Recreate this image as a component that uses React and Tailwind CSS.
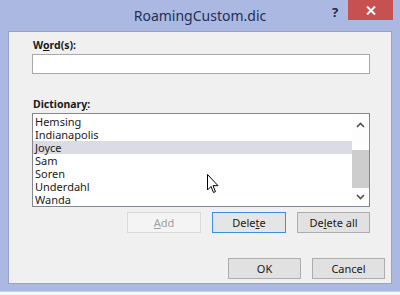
import React from "react";

const words = ["Hemsing", "Indianapolis", "Joyce", "Sam", "Soren", "Underdahl", "Wanda"];

function Btn({ children, className = "", disabled, focused }) {
  return (
    <button
      disabled={disabled}
      className={
        "h-[21px] border text-[11px] leading-none flex items-center justify-center " +
        (disabled
          ? "border-[#d9d9d9] bg-[#f4f4f4] text-[#a0a0a0] "
          : focused
          ? "border-[#3c8fe0] bg-[#e5e5e5] text-[#1a1a1a] "
          : "border-[#adadad] bg-[#e1e1e1] text-[#1a1a1a] ") +
        className
      }
    >
      {children}
    </button>
  );
}

export default function App() {
  return (
    <div
      className="w-[400px] h-[295px] bg-[#f7f7f7] overflow-hidden"
      style={{ fontFamily: '"Noto Sans", "Open Sans", sans-serif' }}
    >
      <div className="w-[400px] h-[292px] bg-[#aab8e2] flex flex-col px-[8px] pb-[7px] border-b border-[#c4cdec]">
        {/* title bar */}
        <div className="h-[31px] shrink-0 relative flex items-center justify-center">
          <span className="text-[14px] text-[#1f2f55] mt-[-1px]">RoamingCustom.dic</span>
          <span className="absolute left-[324px] top-[3px] text-[13px] font-bold text-[#1e2a40]">?</span>
          <div className="absolute left-[340px] top-0 w-[45px] h-[20px] bg-[#c75050] flex items-center justify-center">
            <svg width="10" height="9" viewBox="0 0 10 9">
              <path d="M1 0.5 L9 8.5 M9 0.5 L1 8.5" stroke="#fff" strokeWidth="2" />
            </svg>
          </div>
        </div>

        {/* client area */}
        <div className="flex-1 min-h-0 bg-[#f0f0f0] border border-[#95a3cf] pl-[23px] pr-[21px] flex flex-col relative">
          <div className="mt-[6px] text-[10.5px] font-bold text-[#1a1a1a] leading-[14px] pl-[1px]">
            W<span className="underline">o</span>rd(s):
          </div>
          <div className="mt-[2px] h-[20px] w-[338px] shrink-0 bg-white border border-[#a9a9a9]" />

          <div className="mt-[23px] text-[10.5px] font-bold text-[#1a1a1a] leading-[14px] pl-[1px]">
            Dictionar<span className="underline">y</span>:
          </div>
          <div className="mt-[2px] h-[94px] w-[338px] shrink-0 bg-white border border-[#828790] flex">
            <div className="flex-1 flex flex-col pt-[1px]">
              {words.map((w) => (
                <div
                  key={w}
                  className={
                    "h-[13px] leading-[13px] text-[11px] text-[#1a1a1a] pl-[2px] " +
                    (w === "Joyce" ? "bg-[#dadbe3]" : "")
                  }
                >
                  {w}
                </div>
              ))}
            </div>
            <div className="w-[17px] flex flex-col items-center bg-[#fdfdfd]">
              <svg width="9" height="6" viewBox="0 0 9 6" className="mt-[8px] shrink-0">
                <path d="M1 5 L4.5 1.5 L8 5" stroke="#505050" strokeWidth="1.6" fill="none" />
              </svg>
              <div className="mt-[22px] w-[17px] h-[38px] shrink-0 bg-[#cdcdcd]" />
              <svg width="9" height="6" viewBox="0 0 9 6" className="mt-[6px] shrink-0">
                <path d="M1 1 L4.5 4.5 L8 1" stroke="#505050" strokeWidth="1.6" fill="none" />
              </svg>
            </div>
          </div>

          <div className="mt-[5px] flex justify-end gap-[11px] w-[338px]">
            <Btn disabled className="w-[74px]">
              <span className="underline">A</span>dd
            </Btn>
            <Btn focused className="w-[74px]">
              Dele<span className="underline">t</span>e
            </Btn>
            <Btn className="w-[73px]">
              De<span className="underline">l</span>ete all
            </Btn>
          </div>

          <div className="mt-[25px] flex justify-end gap-[11px] w-[353px]">
            <Btn className="w-[73px]">OK</Btn>
            <Btn className="w-[73px]">Cancel</Btn>
          </div>

          {/* mouse pointer */}
          <svg
            width="13"
            height="20"
            viewBox="0 0 13 20"
            className="absolute left-[198px] top-[142px]"
          >
            <path
              d="M0.5 0.5 L0.5 16 L4 12.5 L6.5 18.5 L8.5 17.6 L6 11.7 L11 11.7 Z"
              fill="#fff"
              stroke="#000"
              strokeWidth="1"
              strokeLinejoin="round"
            />
          </svg>
        </div>
      </div>
    </div>
  );
}
